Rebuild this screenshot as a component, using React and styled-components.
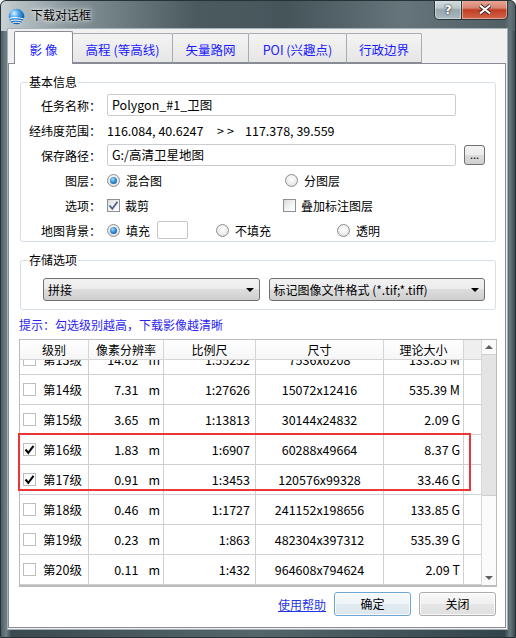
import React from "react"
import styled, { createGlobalStyle } from "styled-components"

const GlobalStyle = createGlobalStyle`
  html, body {
    margin: 0;
    padding: 0;
  }
  body {
    font-family: "Noto Sans CJK SC", "Microsoft YaHei", "Noto Sans", sans-serif;
    font-size: 12px;
    color: #000;
  }
  * {
    box-sizing: border-box;
  }
`

const COLS = [69, 75, 92, 128, 80]

const levels = [
  { lv: 13, res: "14.62", scale: "1:55252", size: "7536x6208", total: "133.85 M" },
  { lv: 14, res: "7.31", scale: "1:27626", size: "15072x12416", total: "535.39 M" },
  { lv: 15, res: "3.65", scale: "1:13813", size: "30144x24832", total: "2.09 G" },
  { lv: 16, res: "1.83", scale: "1:6907", size: "60288x49664", total: "8.37 G", on: true },
  { lv: 17, res: "0.91", scale: "1:3453", size: "120576x99328", total: "33.46 G", on: true },
  { lv: 18, res: "0.46", scale: "1:1727", size: "241152x198656", total: "133.85 G" },
  { lv: 19, res: "0.23", scale: "1:863", size: "482304x397312", total: "535.39 G" },
  { lv: 20, res: "0.11", scale: "1:432", size: "964608x794624", total: "2.09 T" },
]

const tabs = [
  { label: "影 像", w: 59, active: true },
  { label: "高程 (等高线)", w: 101 },
  { label: "矢量路网", w: 77 },
  { label: "POI (兴趣点)", w: 99 },
  { label: "行政边界", w: 76 },
]

const Window = styled.div`
  width: 516px;
  height: 638px;
  display: flex;
  flex-direction: column;
  padding: 0 7px 7px 6px;
  border: 1px solid #263236;
  border-radius: 6px 6px 0 0;
  overflow: hidden;
  background:
    linear-gradient(90deg, rgba(205, 214, 217, 0.95) 0%, rgba(150, 164, 169, 0.8) 14%,
      rgba(70, 86, 91, 0.55) 38%, rgba(55, 70, 75, 0.5) 55%, rgba(120, 136, 141, 0.65) 78%,
      rgba(95, 111, 116, 0.6) 100%) top / 100% 30px no-repeat,
    linear-gradient(90deg, #4e5f64 0%, #6f8186 1%, #3b4a4f 2%, #55666b 50%, #34444a 98%, #6a7b80 99%, #3a4a4f 100%);
`

const TitleBar = styled.div`
  height: 28px;
  display: flex;
  align-items: flex-start;
  margin-top: -1px;
`

const AppIcon = styled.svg`
  width: 17px;
  height: 17px;
  margin: 8px 0 0 1px;
  flex: none;
`

const Title = styled.div`
  flex: 1;
  margin: 7px 0 0 6px;
  font-size: 12px;
  line-height: 16px;
  color: #000;
  text-shadow: 0 0 6px rgba(255, 255, 255, 0.95), 0 0 3px rgba(255, 255, 255, 0.9);
`

const Captions = styled.div`
  display: flex;
`

const CaptionBtn = styled.div`
  width: ${p => p.$w}px;
  height: 20px;
  display: flex;
  align-items: center;
  justify-content: center;
  border: 1px solid #2a363a;
  border-top: none;
  border-radius: ${p => (p.$close ? "0 0 5px 0" : "0 0 0 5px")};
  margin-left: ${p => (p.$close ? "-1px" : "0")};
  box-shadow: inset 0 0 0 1px rgba(255, 255, 255, 0.4);
  background: ${p =>
    p.$close
      ? "linear-gradient(#e9a99a 0%, #d98570 42%, #c23d22 52%, #d2664a 100%)"
      : "linear-gradient(#d8e0e3 0%, #b9c6ca 42%, #95a6ac 52%, #abbabf 100%)"};
  color: #fff;
  font: bold 13px "DejaVu Sans", sans-serif;
  text-shadow: 0 0 2px #1f2a2e, 0 0 1px #000;
`

const Client = styled.div`
  flex: 1;
  display: flex;
  flex-direction: column;
  background: #f0f0f0;
  border: 1px solid #a4b1b6;
  padding: 2px 1px 1px 0;
`

const TabStrip = styled.div`
  height: 32px;
  display: flex;
  align-items: flex-end;
  padding-left: 6px;
`

const Tab = styled.div`
  width: ${p => p.$w}px;
  height: ${p => (p.$active ? 33 : 30)}px;
  margin-left: ${p => (p.$first ? 0 : -1)}px;
  margin-bottom: ${p => (p.$active ? -1 : 0)}px;
  padding-top: ${p => (p.$active ? 11 : 9)}px;
  position: relative;
  z-index: ${p => (p.$active ? 2 : 1)};
  text-align: center;
  line-height: 14px;
  font-size: 12.5px;
  color: #1a1aff;
  border: 1px solid ${p => (p.$active ? "#898c95" : "#a7abb2")};
  border-bottom: ${p => (p.$active ? "none" : "1px solid #898c95")};
  border-radius: 2px 2px 0 0;
  background: ${p => (p.$active ? "#fff" : "linear-gradient(#f4f4f4, #e6e6e6)")};
  white-space: nowrap;
`

const Panel = styled.div`
  flex: 1;
  display: flex;
  flex-direction: column;
  background: #fff;
  border: 1px solid #898c95;
  padding: 11px 9px 0 11px;
`

const Group = styled.fieldset`
  margin: ${p => (p.$first ? 0 : "11px")} 0 0;
  padding: ${p => p.$pad};
  border: 1px solid #d5dfe5;
  border-radius: 3px;
  min-width: 0;
`

const Legend = styled.legend`
  margin-left: 7px;
  padding: 0 1px;
  line-height: 14px;
  font-size: 12px;
`

const Rows = styled.div`
  display: flex;
  flex-direction: column;
  gap: 3px;
`

const FormRow = styled.div`
  height: 22px;
  display: flex;
  align-items: center;
  padding-left: 8px;
`

const Label = styled.div`
  width: 72px;
  margin-right: 6px;
  text-align: right;
  white-space: nowrap;
`

const TextInput = styled.div`
  width: 349px;
  height: 22px;
  border: 1px solid #c9cdd2;
  border-radius: 2px;
  padding-left: 4px;
  line-height: 20px;
  font-size: 12.5px;
`

const SmallBtn = styled.div`
  width: 21px;
  height: 20px;
  margin-left: 8px;
  border: 1px solid #707070;
  border-radius: 3px;
  background: linear-gradient(#f2f2f2 0%, #ebebeb 50%, #dddddd 50%, #cfcfcf 100%);
  text-align: center;
  line-height: 16px;
  font-size: 11px;
`

const Coord = styled.span`
  width: ${p => p.$w}px;
  font-size: 12.5px;
  white-space: nowrap;
  letter-spacing: ${p => p.$spread || 0}px;
`

const Option = styled.div`
  width: ${p => p.$w}px;
  display: flex;
  align-items: center;
  white-space: nowrap;
`

const Radio = styled.span`
  width: 13px;
  height: 13px;
  flex: none;
  margin-right: 6px;
  border-radius: 50%;
  border: 1px solid #8e8f8f;
  background: radial-gradient(circle at 50% 40%, #ffffff 0%, #ececec 55%, #cfcfcf 100%);
  display: flex;
  align-items: center;
  justify-content: center;

  &::after {
    content: "";
    display: ${p => (p.$on ? "block" : "none")};
    width: 7px;
    height: 7px;
    border-radius: 50%;
    background: radial-gradient(circle at 40% 35%, #9fdcff 0%, #2e88d3 50%, #0b3f7a 100%);
  }
`

const CheckBox = styled.span`
  width: 13px;
  height: 13px;
  flex: none;
  margin-right: 5px;
  border: 1px solid #8e8f8f;
  background: linear-gradient(135deg, #dcdcdc 0%, #f6f6f6 60%, #ffffff 100%);
  display: flex;
  align-items: center;
  justify-content: center;
`

const ColorBox = styled.span`
  width: 31px;
  height: 18px;
  margin-left: 7px;
  border: 1px solid #c2c6cb;
  border-radius: 2px;
  background: #fff;
`

const SelectRow = styled.div`
  display: flex;
  gap: 9px;
  padding-left: 22px;
`

const Select = styled.div`
  width: 217px;
  height: 23px;
  display: flex;
  align-items: center;
  justify-content: space-between;
  padding: 0 5px 0 4px;
  border: 1px solid #707070;
  border-radius: 3px;
  background: linear-gradient(#f2f2f2 0%, #ebebeb 50%, #dddddd 50%, #cfcfcf 100%);
  white-space: nowrap;

  &::after {
    content: "";
    border-left: 4px solid transparent;
    border-right: 4px solid transparent;
    border-top: 4px solid #000;
  }
`

const Hint = styled.div`
  margin: 8px 0 0 -1px;
  line-height: 14px;
  color: #2e1ff0;
`

const Table = styled.div`
  position: relative;
  margin: 7px -1px 0;
  height: 248px;
  display: flex;
  border: 1px solid #bcbcbc;
  border-bottom-width: 2px;
`

const TableMain = styled.div`
  flex: 1;
  display: flex;
  flex-direction: column;
`

const HeaderRow = styled.div`
  height: 20px;
  display: flex;
  background: #efefef;
  border-bottom: 1px solid #d5d5d5;
`

const HeadCell = styled.div`
  width: ${p => p.$w}px;
  text-align: center;
  line-height: 19px;
  background: linear-gradient(#ffffff, #f6f6f6);
  border-right: 1px solid #d5d5d5;
`

const Body = styled.div`
  height: 225px;
  overflow: hidden;
`

const BodyInner = styled.div`
  margin-top: -15px;
`

const Row = styled.div`
  height: 30px;
  display: flex;
  border-bottom: 1px solid #d0d0d0;
`

const Cell = styled.div`
  width: ${p => p.$w}px;
  display: flex;
  align-items: center;
  justify-content: ${p => p.$align || "flex-start"};
  padding: 0 ${p => p.$pr || 0}px 0 ${p => p.$pl || 0}px;
  border-right: 1px solid #d0d0d0;
  font-size: 12.5px;
  white-space: nowrap;
`

const LevelCheck = styled.span`
  width: 13px;
  height: 13px;
  margin-right: 7px;
  border: 1px solid #bdbdbd;
  background: #fff;
  display: flex;
  align-items: center;
  justify-content: center;
`

const Num = styled.span`
  flex: 1;
  text-align: right;
`

const Unit = styled.span`
  margin-left: 10px;
`

const Scrollbar = styled.div`
  width: 15px;
  display: flex;
  flex-direction: column;
  border-left: 1px solid #d8d8d8;
  background: #f7f7f7;
`

const ScrollArrow = styled.div`
  height: 15px;
  display: flex;
  align-items: center;
  justify-content: center;
  background: #fafafa;
  border-bottom: ${p => (p.$down ? "none" : "1px solid #cfcfcf")};

  &::after {
    content: "";
    border-left: 4px solid transparent;
    border-right: 4px solid transparent;
    ${p => (p.$down ? "border-top: 4px solid #606060;" : "border-bottom: 4px solid #606060;")}
  }
`

const Thumb = styled.div`
  height: 141px;
  background: #e4e4e4;
  border-bottom: 1px solid #cfcfcf;
`

const Track = styled.div`
  flex: 1;
  background: #fbfbfb;
`

const Highlight = styled.div`
  position: absolute;
  left: -2px;
  top: 93px;
  width: 453px;
  height: 58px;
  border: 2px solid #ee3535;
  pointer-events: none;
`

const Footer = styled.div`
  margin-top: 5px;
  display: flex;
  align-items: center;
  justify-content: flex-end;
  gap: 8px;
`

const HelpLink = styled.a`
  color: #1f35e6;
  text-decoration: underline;
  cursor: pointer;
`

const Button = styled.div`
  width: 77px;
  height: 24px;
  text-align: center;
  line-height: 22px;
  border: 1px solid ${p => (p.$default ? "#6fa6d4" : "#adadad")};
  border-radius: 3px;
  background: ${p =>
    p.$default
      ? "linear-gradient(#f6fafd 0%, #eef4f9 50%, #e3ebf2 50%, #dde6ee 100%)"
      : "linear-gradient(#f8f8f8 0%, #f0f0f0 50%, #e6e6e6 50%, #e0e0e0 100%)"};
  box-shadow: inset 0 0 0 1px rgba(255, 255, 255, 0.8);
`

const Check = ({ color = "#000", w = 2 }) => (
  <svg width="11" height="11" viewBox="0 0 11 11">
    <path d="M1.5 5.5 L4.3 8.8 L9.5 1.8" fill="none" stroke={color} strokeWidth={w} />
  </svg>
)

const Globe = () => (
  <AppIcon viewBox="0 0 17 17">
    <defs>
      <radialGradient id="g" cx="35%" cy="30%" r="75%">
        <stop offset="0" stopColor="#d5f0ff" />
        <stop offset="0.45" stopColor="#3e9be4" />
        <stop offset="1" stopColor="#0a4e9e" />
      </radialGradient>
    </defs>
    <circle cx="8.5" cy="8.5" r="7.8" fill="url(#g)" />
    <path d="M1.5 10.5 C5 9 11 9.5 16 11" stroke="#fff" strokeWidth="1.2" fill="none" />
    <path d="M2.5 12.8 C6 11.5 11 12 15 13.3" stroke="#fff" strokeWidth="1" fill="none" />
    <path d="M4.5 14.8 C7.5 14 10.5 14.2 13 15" stroke="#fff" strokeWidth="0.9" fill="none" />
  </AppIcon>
)

const App = () => (
  <>
    <GlobalStyle />
    <Window>
      <TitleBar>
        <Globe />
        <Title>下载对话框</Title>
        <Captions>
          <CaptionBtn $w={28}>?</CaptionBtn>
          <CaptionBtn $w={47} $close>
            <svg width="14" height="11" viewBox="0 0 14 11">
              <path d="M2 1.5 L12 9.5 M12 1.5 L2 9.5" stroke="#3a2a26" strokeWidth="4" />
              <path d="M2 1.5 L12 9.5 M12 1.5 L2 9.5" stroke="#fff" strokeWidth="2.2" />
            </svg>
          </CaptionBtn>
        </Captions>
      </TitleBar>

      <Client>
        <TabStrip>
          {tabs.map((t, i) => (
            <Tab key={t.label} $w={t.w} $active={t.active} $first={i === 0}>
              {t.label}
            </Tab>
          ))}
        </TabStrip>

        <Panel>
          <Group $first $pad="5px 0 0">
            <Legend>基本信息</Legend>
            <Rows>
              <FormRow>
                <Label>任务名称：</Label>
                <TextInput>Polygon_#1_卫图</TextInput>
              </FormRow>
              <FormRow>
                <Label>经纬度范围：</Label>
                <Coord $w={110}>116.084, 40.6247</Coord>
                <Coord $w={28} $spread={3}>&gt;&gt;</Coord>
                <Coord>117.378, 39.559</Coord>
              </FormRow>
              <FormRow>
                <Label>保存路径：</Label>
                <TextInput>G:/高清卫星地图</TextInput>
                <SmallBtn>...</SmallBtn>
              </FormRow>
              <FormRow>
                <Label>图层：</Label>
                <Option $w={178}>
                  <Radio $on />
                  混合图
                </Option>
                <Option>
                  <Radio />
                  分图层
                </Option>
              </FormRow>
              <FormRow>
                <Label>选项：</Label>
                <Option $w={176}>
                  <CheckBox>
                    <Check color="#4b5f92" w={1.8} />
                  </CheckBox>
                  裁剪
                </Option>
                <Option>
                  <CheckBox />
                  叠加标注图层
                </Option>
              </FormRow>
              <FormRow>
                <Label>地图背景：</Label>
                <Option $w={109}>
                  <Radio $on />
                  填充
                  <ColorBox />
                </Option>
                <Option $w={121}>
                  <Radio />
                  不填充
                </Option>
                <Option>
                  <Radio />
                  透明
                </Option>
              </FormRow>
            </Rows>
          </Group>

          <Group $pad="11px 10px 8px 0">
            <Legend>存储选项</Legend>
            <SelectRow>
              <Select>拼接</Select>
              <Select>标记图像文件格式 (*.tif;*.tiff)</Select>
            </SelectRow>
          </Group>

          <Hint>提示：勾选级别越高，下载影像越清晰</Hint>

          <Table>
            <TableMain>
              <HeaderRow>
                {["级别", "像素分辨率", "比例尺", "尺寸", "理论大小"].map((h, i) => (
                  <HeadCell key={h} $w={COLS[i]}>
                    {h}
                  </HeadCell>
                ))}
              </HeaderRow>
              <Body>
                <BodyInner>
                  {levels.map(r => (
                    <Row key={r.lv}>
                      <Cell $w={COLS[0]} $pl={3}>
                        <LevelCheck>{r.on && <Check />}</LevelCheck>
                        第{r.lv}级
                      </Cell>
                      <Cell $w={COLS[1]} $pr={3}>
                        <Num>{r.res}</Num>
                        <Unit>m</Unit>
                      </Cell>
                      <Cell $w={COLS[2]} $align="flex-end" $pr={5}>
                        {r.scale}
                      </Cell>
                      <Cell $w={COLS[3]} $align="center">
                        {r.size}
                      </Cell>
                      <Cell $w={COLS[4]} $align="flex-end" $pr={3}>
                        {r.total}
                      </Cell>
                    </Row>
                  ))}
                </BodyInner>
              </Body>
            </TableMain>
            <Scrollbar>
              <ScrollArrow />
              <Thumb />
              <Track />
              <ScrollArrow $down />
            </Scrollbar>
            <Highlight />
          </Table>

          <Footer>
            <HelpLink>使用帮助</HelpLink>
            <Button $default>确定</Button>
            <Button>关闭</Button>
          </Footer>
        </Panel>
      </Client>
    </Window>
  </>
)

export default App
